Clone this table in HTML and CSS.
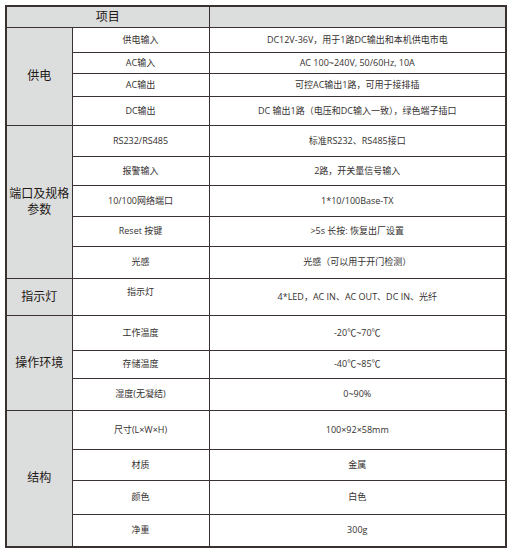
FILE: index.html
```html
<!DOCTYPE html>
<html lang="zh">
<head>
<meta charset="utf-8">
<link rel="stylesheet" href="styles.css">
</head>
<body>
<table class="spec">
  <colgroup><col class="c1"><col class="c2"><col class="c3"></colgroup>
  <tr class="h21 head"><td colspan="2" class="title">项目</td><td></td></tr>
  <tr class="h25"><td rowspan="4" class="group">供电</td><td>供电输入</td><td>DC12V-36V，用于1路DC输出和本机供电市电</td></tr>
  <tr class="h21"><td>AC输入</td><td>AC 100~240V, 50/60Hz, 10A</td></tr>
  <tr class="h23"><td>AC输出</td><td>可控AC输出1路，可用于接排插</td></tr>
  <tr class="h29"><td>DC输出</td><td>DC 输出1路（电压和DC输入一致），绿色端子插口</td></tr>
  <tr class="h31"><td rowspan="5" class="group">端口及规格<br>参数</td><td>RS232/RS485</td><td>标准RS232、RS485接口</td></tr>
  <tr class="h29"><td>报警输入</td><td>2路，开关量信号输入</td></tr>
  <tr class="h31"><td>10/100网络端口</td><td>1*10/100Base-TX</td></tr>
  <tr class="h30"><td>Reset 按键</td><td>&gt;5s 长按: 恢复出厂设置</td></tr>
  <tr class="h32"><td>光感</td><td>光感（可以用于开门检测）</td></tr>
  <tr class="h37"><td class="group">指示灯</td><td class="top">指示灯</td><td>4*LED，AC IN、AC OUT、DC IN、光纤</td></tr>
  <tr class="h35"><td rowspan="3" class="group">操作环境</td><td>工作温度</td><td>-20℃~70℃</td></tr>
  <tr class="h28"><td>存储温度</td><td>-40℃~85℃</td></tr>
  <tr class="h32"><td>湿度(无凝结)</td><td>0~90%</td></tr>
  <tr class="h39"><td rowspan="4" class="group">结构</td><td>尺寸(L×W×H)</td><td>100×92×58mm</td></tr>
  <tr class="h31"><td>材质</td><td>金属</td></tr>
  <tr class="h34"><td>颜色</td><td>白色</td></tr>
  <tr class="h33"><td>净重</td><td>300g</td></tr>
</table>
</body>
</html>
```

FILE: styles.css
```css
html, body {
  margin: 0;
  padding: 0;
  background: #ffffff;
}
body {
  padding: 5px 0 0 5px;
  font-family: "Open Sans", "Noto Sans CJK SC", sans-serif;
  color: #353130;
}
.spec {
  border-collapse: collapse;
  width: 502px;
  table-layout: fixed;
  border: 2px solid #3a3230;
}
.c1 { width: 66px; }
.c2 { width: 137px; }
.c3 { width: auto; }
.spec td {
  border: 1.5px solid #3a3230;
  padding: 0;
  text-align: center;
  vertical-align: middle;
  font-size: 9px;
  line-height: 12px;
  white-space: nowrap;
}
.spec .head td {
  background: #dcdddd;
}
.spec td.title {
  font-size: 12px;
  line-height: 14px;
  color: #231815;
}
.spec td.group {
  background: #dcdddd;
  font-size: 12px;
  line-height: 16px;
  color: #231815;
}
.spec td.top {
  vertical-align: top;
  padding-top: 7px;
}
.h21 { height: 21px; }
.h23 { height: 23px; }
.h25 { height: 25px; }
.h28 { height: 28px; }
.h29 { height: 29px; }
.h30 { height: 30px; }
.h31 { height: 31px; }
.h32 { height: 32px; }
.h33 { height: 33px; }
.h34 { height: 34px; }
.h35 { height: 35px; }
.h37 { height: 37px; }
.h39 { height: 39px; }
```
